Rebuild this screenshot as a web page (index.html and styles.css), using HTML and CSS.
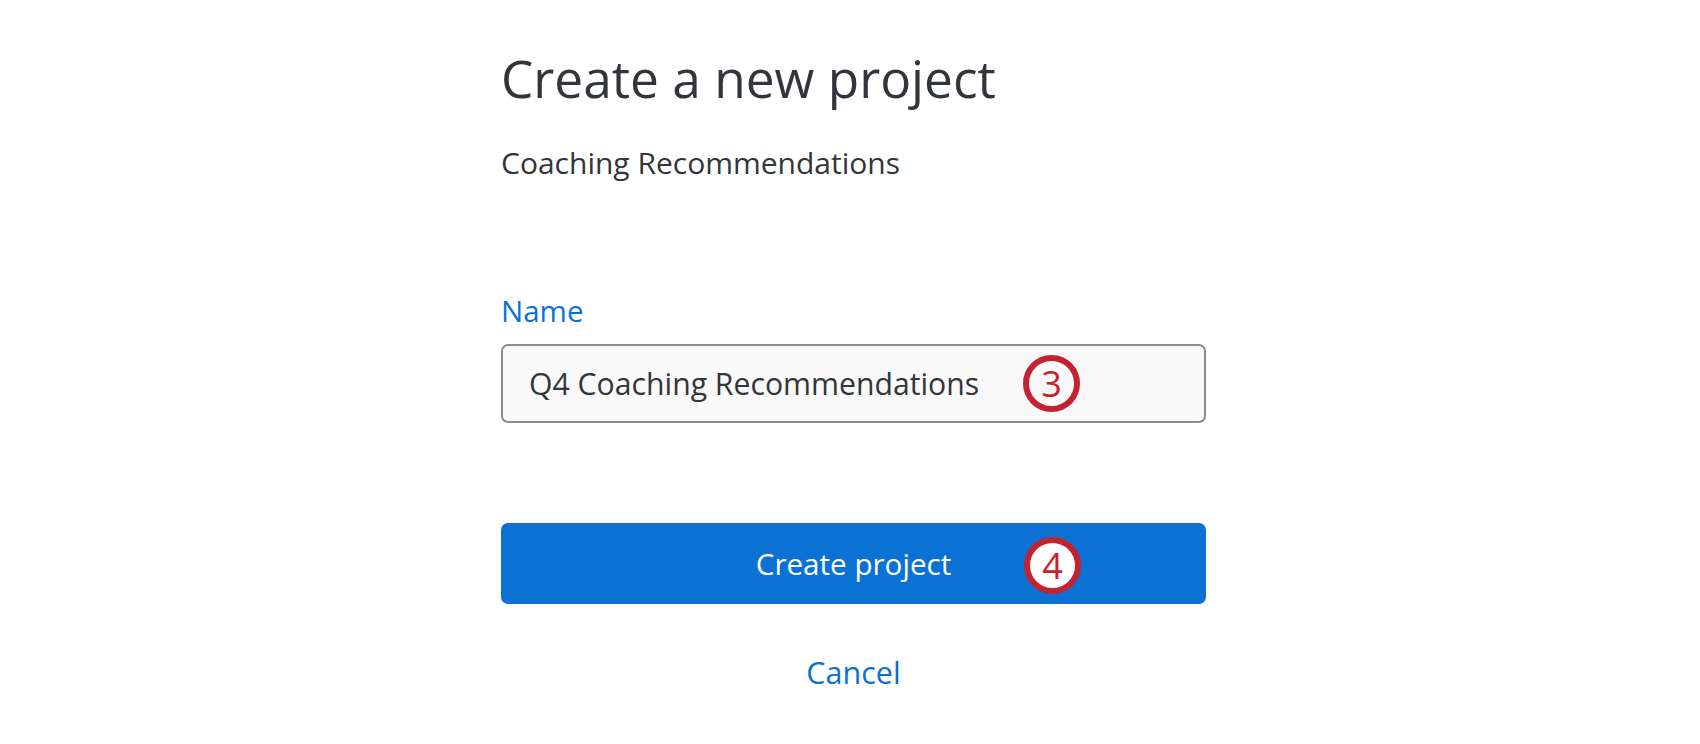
FILE: index.html
```html
<!DOCTYPE html>
<html lang="en">
<head>
<meta charset="utf-8">
<title>Create a new project</title>
<link rel="stylesheet" href="styles.css">
</head>
<body>
<main class="panel">
  <h1 class="title">Create a new project</h1>
  <p class="subtitle">Coaching Recommendations</p>
  <label class="field-label" for="project-name">Name</label>
  <div class="input-box">
    <span class="input-value" id="project-name">Q4 Coaching Recommendations</span>
    <span class="badge badge-input">3</span>
  </div>
  <button class="primary-btn" type="button">
    <span>Create project</span>
    <span class="badge badge-btn">4</span>
  </button>
  <div class="cancel-row"><a class="cancel-link" href="#">Cancel</a></div>
</main>
</body>
</html>
```

FILE: styles.css
```css
* { box-sizing: border-box; }

html, body {
  margin: 0;
  padding: 0;
  background: #ffffff;
}

body {
  font-family: "Open Sans", "Noto Sans", sans-serif;
  color: #32363a;
}

.panel {
  width: 705px;
  margin-left: 501px;
  display: flex;
  flex-direction: column;
}

.title {
  margin: 42px 0 0 0;
  font-size: 51.4px;
  line-height: 72px;
  font-weight: 400;
  color: #32363a;
}

.subtitle {
  margin: 29px 0 0 0;
  font-size: 30px;
  line-height: 40px;
  color: #32363a;
}

.field-label {
  margin-top: 108px;
  font-size: 29.5px;
  line-height: 40px;
  color: #0b72d4;
}

.input-box {
  position: relative;
  margin-top: 13px;
  height: 79px;
  border: 2px solid #8c8c8c;
  border-radius: 7px;
  background: #f9f9f9;
  display: flex;
  align-items: center;
  padding-left: 26px;
}

.input-value {
  font-size: 30.2px;
  line-height: 40px;
  color: #32363a;
}

.primary-btn {
  position: relative;
  margin-top: 100px;
  height: 81px;
  border: none;
  border-radius: 7px;
  background: #0b71d3;
  color: #ffffff;
  font-family: inherit;
  font-size: 29.6px;
  font-weight: 500;
  line-height: 40px;
  display: flex;
  align-items: center;
  justify-content: center;
  padding: 0;
}

.badge {
  position: absolute;
  width: 57px;
  height: 57px;
  border: 6px solid #c32231;
  border-radius: 50%;
  background: #ffffff;
  color: #c32231;
  font-family: "Open Sans", sans-serif;
  font-size: 36px;
  font-weight: 400;
  line-height: 1;
  display: flex;
  align-items: center;
  justify-content: center;
}

.badge-input {
  left: 520px;
  top: 9px;
  background: #f9f9f9;
}

.badge-btn {
  left: 523px;
  top: 14px;
}

.cancel-row {
  margin-top: 48px;
  display: flex;
  justify-content: center;
}

.cancel-link {
  font-size: 30.5px;
  font-weight: 500;
  line-height: 40px;
  color: #0b72d4;
  text-decoration: none;
}
```
